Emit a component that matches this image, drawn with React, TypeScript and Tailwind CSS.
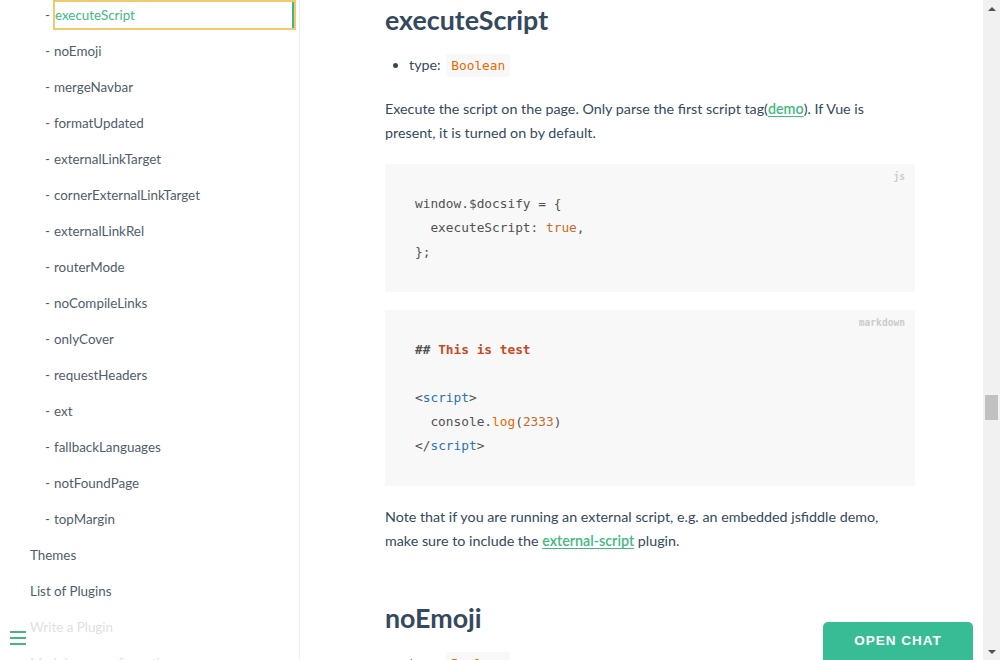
import {ReactNode} from "react";

const subItems = [
    "executeScript",
    "noEmoji",
    "mergeNavbar",
    "formatUpdated",
    "externalLinkTarget",
    "cornerExternalLinkTarget",
    "externalLinkRel",
    "routerMode",
    "noCompileLinks",
    "onlyCover",
    "requestHeaders",
    "ext",
    "fallbackLanguages",
    "notFoundPage",
    "topMargin",
];

const topItems = ["Themes", "List of Plugins", "Write a Plugin", "Markdown configuration"];

const sans = "font-['Lato','Liberation_Sans',sans-serif]";
const mono = "font-['DejaVu_Sans_Mono','Liberation_Mono',monospace]";

function Sidebar() {
    return (
        <aside className={`relative w-[300px] shrink-0 overflow-hidden border-r border-[#eee] ${sans}`}>
            <ul className="-mt-[3px] text-[13.4px] text-[#505d6b]">
                {subItems.map((item, i) => (
                    <li key={item} className="flex h-9 items-center pl-[45px]">
                        <span className="w-[9px]">-</span>
                        {i === 0 ? (
                            <span className="-ml-[1px] mr-[3px] flex h-[30px] flex-1 items-stretch border-2 border-[#f3c96f]">
                                <span className="flex flex-1 items-center border-r-2 border-[#42b983] text-[#42b983]">
                                    {item}
                                </span>
                            </span>
                        ) : (
                            <span>{item}</span>
                        )}
                    </li>
                ))}
                {topItems.map((item) => (
                    <li key={item} className="flex h-9 items-center pl-[30px]">
                        {item}
                    </li>
                ))}
            </ul>
            <div className="absolute bottom-0 left-0 flex h-[44px] w-[284px] items-center bg-white/80 pl-[10px]">
                <div className="flex w-4 flex-col gap-[4px]">
                    <span className="h-[2px] bg-[#42b983]" />
                    <span className="h-[2px] bg-[#42b983]" />
                    <span className="h-[2px] bg-[#42b983]" />
                </div>
            </div>
        </aside>
    );
}

function CodeBlock({lang, children}: {lang: string; children: ReactNode}) {
    return (
        <pre className={`relative bg-[#f8f8f8] pt-[28px] pb-[28px] pl-[30px] text-[12.8px] leading-6 text-[#525252] ${mono}`}>
            <span className="absolute top-[1px] right-[10px] text-[9.6px] font-bold text-[#ccc]">{lang}</span>
            {children}
        </pre>
    );
}

function InlineCode({children}: {children: ReactNode}) {
    return (
        <code className={`ml-[2px] rounded-[2px] bg-[#f8f8f8] px-[5px] py-[4px] text-[12.8px] leading-none text-[#e96900] ${mono}`}>
            {children}
        </code>
    );
}

function Content() {
    const link = "font-semibold text-[#42b983] underline underline-offset-2";

    return (
        <main className={`relative flex-1 overflow-hidden ${sans}`}>
            <div className="ml-[85px] w-[530px] text-[14.3px] leading-6 text-[#34495e]">
                <h2 className="text-[26.8px] leading-10 font-bold">executeScript</h2>
                <ul className="mt-[13px] list-disc pl-6">
                    <li>
                        type: <InlineCode>Boolean</InlineCode>
                    </li>
                </ul>
                <p className="mt-[20px] pr-[20px]">
                    Execute the script on the page. Only parse the first script tag(<span className={link}>demo</span>).
                    If Vue is present, it is turned on by default.
                </p>
                <div className="mt-[19px]">
                    <CodeBlock lang="js">
                        {"window.$docsify = {\n  executeScript: "}
                        <span className="text-[#c76b29]">true</span>
                        {",\n};"}
                    </CodeBlock>
                </div>
                <div className="mt-[18px]">
                    <CodeBlock lang="markdown">
                        <span className="font-bold">## </span>
                        <span className="font-bold text-[#c94922]">This is test</span>
                        {"\n\n<"}
                        <span className="text-[#2973b7]">script</span>
                        {">\n  console."}
                        <span className="text-[#e96900]">log</span>
                        {"("}
                        <span className="text-[#c76b29]">2333</span>
                        {")\n</"}
                        <span className="text-[#2973b7]">script</span>
                        {">"}
                    </CodeBlock>
                </div>
                <p className="mt-[19px] pr-[20px]">
                    Note that if you are running an external script, e.g. an embedded jsfiddle demo, make sure to include
                    the <span className={link}>external-script</span> plugin.
                </p>
                <h2 className="mt-[45px] text-[26.8px] leading-10 font-bold">noEmoji</h2>
                <ul className="mt-[13px] list-disc pl-6">
                    <li>
                        type: <InlineCode>Boolean</InlineCode>
                    </li>
                </ul>
            </div>
            <button className="absolute right-[10px] -bottom-[10px] h-[48px] w-[150px] rounded-t-[5px] bg-[#38bc96] pb-[10px] font-['Liberation_Sans',Arial,sans-serif] text-[13.5px] font-bold tracking-[1px] text-white">
                OPEN CHAT
            </button>
        </main>
    );
}

function Scrollbar() {
    return (
        <div className="flex w-[17px] shrink-0 flex-col items-center bg-[#f1f1f1]">
            <div className="flex h-[17px] items-center justify-center">
                <span className="h-0 w-0 border-x-[4px] border-b-[4px] border-x-transparent border-b-[#505050]" />
            </div>
            <div className="mt-[378px] h-[25px] w-[13px] bg-[#c1c1c1]" />
            <div className="flex-1" />
            <div className="flex h-[17px] items-center justify-center">
                <span className="h-0 w-0 border-x-[4px] border-t-[4px] border-x-transparent border-t-[#505050]" />
            </div>
        </div>
    );
}

export default function App() {
    return (
        <div className="flex h-[660px] w-[1000px] overflow-hidden bg-white">
            <Sidebar />
            <Content />
            <Scrollbar />
        </div>
    );
}
